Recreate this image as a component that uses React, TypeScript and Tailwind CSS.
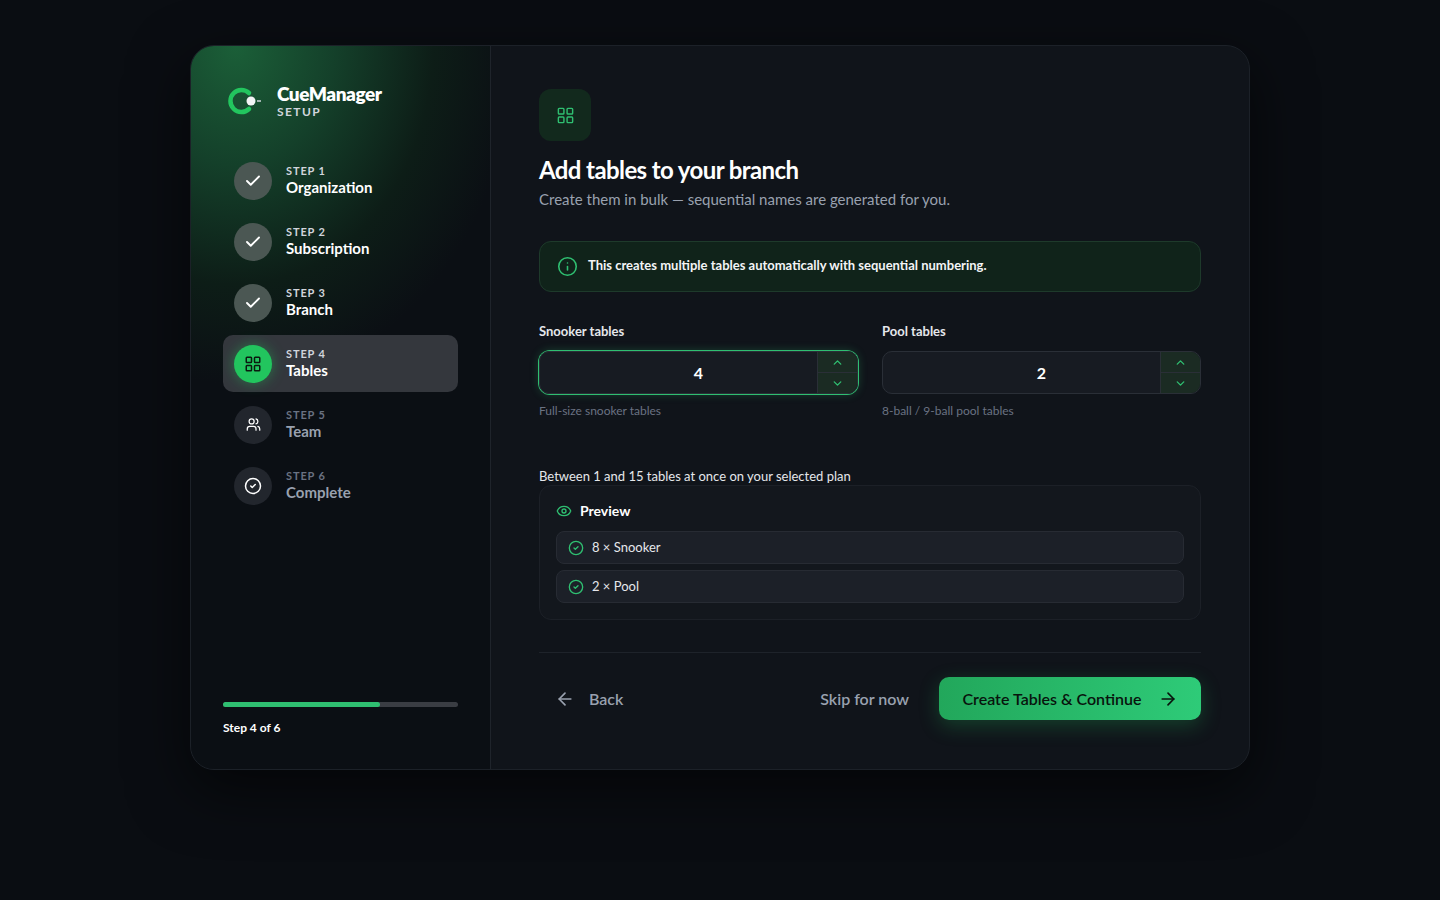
import React from "react";
import { Check, LayoutGrid, Users, CircleCheck, Info, ChevronUp, ChevronDown, Eye, ArrowLeft, ArrowRight } from "lucide-react";

const steps = [
  { n: 1, name: "Organization", state: "done" },
  { n: 2, name: "Subscription", state: "done" },
  { n: 3, name: "Branch", state: "done" },
  { n: 4, name: "Tables", state: "active" },
  { n: 5, name: "Team", state: "todo", icon: "users" },
  { n: 6, name: "Complete", state: "todo", icon: "check" },
];

function Stepper({ value }: { value: string }) {
  return (
    <div className="flex h-[43px] rounded-[10px] border border-[#2a2f37] bg-[#171b22] overflow-hidden">
      <div className="flex-1 flex items-center justify-center pl-[40px] text-[16px] font-bold text-white">{value}</div>
      <div className="w-[40px] flex flex-col border-l border-[#2a2f37] bg-[#1b2b23]">
        <div className="flex-1 flex items-center justify-center border-b border-[#2a2f37] text-[#2fbf71]"><ChevronUp size={13} strokeWidth={2.5} /></div>
        <div className="flex-1 flex items-center justify-center text-[#2fbf71]"><ChevronDown size={13} strokeWidth={2.5} /></div>
      </div>
    </div>
  );
}

export default function App() {
  return (
    <div className="min-h-[900px] w-full bg-[#0a0d12] flex justify-center pt-[45px]" style={{ fontFamily: "Lato, 'Noto Sans', sans-serif" }}>
      <div className="w-[1060px] h-[725px] rounded-[24px] border border-[#1c2128] bg-[#10141a] flex overflow-hidden shadow-[0_20px_60px_rgba(0,0,0,0.6)]">
        <aside className="w-[300px] border-r border-[#1f242b] flex flex-col px-[32px] pt-[38px] pb-[32px] bg-[radial-gradient(ellipse_110%_55%_at_15%_0%,#1b5f38_0%,#14402a_30%,#0d1d17_60%,#0b0f14_85%)]">
          <div className="flex items-center gap-[12px] pl-[4px]">
            <svg width="38" height="30" viewBox="0 0 38 30">
              <path d="M22 7 A11 11 0 1 0 22 23" fill="none" stroke="#22c55e" strokeWidth="4.5" strokeLinecap="round" />
              <circle cx="24" cy="15" r="4.5" fill="#f3f4f6" />
              <line x1="30" y1="15" x2="34" y2="15" stroke="#d1d5db" strokeWidth="1.5" />
            </svg>
            <div className="leading-none">
              <div className="text-[19px] font-extrabold text-white tracking-tight">CueManager</div>
              <div className="text-[12px] font-bold text-gray-300 tracking-[0.12em] mt-[3px]">SETUP</div>
            </div>
          </div>
          <div className="mt-[34px] flex flex-col gap-[4px]">
            {steps.map((s) => {
              const active = s.state === "active";
              return (
                <div key={s.n} className={`flex items-center gap-[14px] h-[57px] px-[11px] rounded-[10px] ${active ? "bg-[#34373d]" : ""}`}>
                  <div className={`w-[38px] h-[38px] rounded-full flex items-center justify-center ${s.state === "done" ? "bg-[#4b5753] text-white" : active ? "bg-[#22c55e] text-[#0b1a10] shadow-[0_0_14px_rgba(34,197,94,0.45)]" : "bg-[#22262d] text-white"}`}>
                    {s.state === "done" && <Check size={18} strokeWidth={2.5} />}
                    {active && <LayoutGrid size={18} strokeWidth={2} />}
                    {s.icon === "users" && <Users size={15} strokeWidth={2} />}
                    {s.icon === "check" && <CircleCheck size={18} strokeWidth={2} />}
                  </div>
                  <div className="leading-tight">
                    <div className={`text-[11px] font-bold tracking-[0.08em] ${s.state === "todo" ? "text-gray-500" : "text-gray-300"}`}>STEP {s.n}</div>
                    <div className={`text-[15px] font-bold ${s.state === "todo" ? "text-gray-400" : "text-white"}`}>{s.name}</div>
                  </div>
                </div>
              );
            })}
          </div>
          <div className="mt-auto">
            <div className="h-[5px] rounded-full bg-[#3a3d43]">
              <div className="h-full w-[67%] rounded-full bg-[#2fbf71]" />
            </div>
            <div className="mt-[12px] text-[12px] font-bold text-white">Step 4 of 6</div>
          </div>
        </aside>
        <main className="flex-1 px-[48px] pt-[43px]">
          <div className="w-[52px] h-[52px] rounded-[12px] bg-[#12291d] flex items-center justify-center text-[#2fbf71]">
            <LayoutGrid size={19} strokeWidth={1.8} />
          </div>
          <h1 className="mt-[11px] text-[24px] font-bold text-white tracking-tight">Add tables to your branch</h1>
          <p className="text-[15px] text-gray-400">Create them in bulk — sequential names are generated for you.</p>
          <div className="mt-[30px] h-[51px] rounded-[12px] border border-[#1e3a2b] bg-[#10231a] flex items-center gap-[10px] px-[17px]">
            <Info size={21} className="text-[#2fbf71]" strokeWidth={1.8} />
            <span className="text-[13px] font-bold text-gray-100">This creates multiple tables automatically with sequential numbering.</span>
          </div>
          <div className="mt-[30px] grid grid-cols-2 gap-[24px]">
            <div>
              <div className="text-[13px] font-bold text-gray-200 mb-[10px]">Snooker tables</div>
              <div className="rounded-[11px] ring-1 ring-[#2fbf71] shadow-[0_0_10px_rgba(47,191,113,0.3)]"><Stepper value="4" /></div>
              <div className="mt-[8px] text-[12px] text-gray-500">Full-size snooker tables</div>
            </div>
            <div>
              <div className="text-[13px] font-bold text-gray-200 mb-[10px]">Pool tables</div>
              <Stepper value="2" />
              <div className="mt-[8px] text-[12px] text-gray-500">8-ball / 9-ball pool tables</div>
            </div>
          </div>
          <div className="mt-[48px] text-[13px] leading-[16px] text-gray-200">Between 1 and 15 tables at once on your selected plan</div>
          <div className="mt-[1px] rounded-[12px] border border-[#1c2027] bg-[#13171d] px-[16px] pt-[15px] pb-[16px]">
            <div className="flex items-center gap-[8px] text-[14px] leading-[20px] font-bold text-white">
              <Eye size={16} className="text-[#2fbf71]" /> Preview
            </div>
            <div className="mt-[10px] flex flex-col gap-[6px]">
              {["8 × Snooker", "2 × Pool"].map((t) => (
                <div key={t} className="h-[33px] rounded-[8px] border border-[#272b33] bg-[#1c2028] flex items-center gap-[8px] px-[11px] text-[13px] text-gray-200">
                  <CircleCheck size={16} className="text-[#2fbf71]" /> {t}
                </div>
              ))}
            </div>
          </div>
          <div className="mt-[32px] border-t border-[#1e232a] pt-[24px] flex items-center">
            <button className="flex items-center gap-[14px] px-[16px] text-[16px] font-semibold text-gray-400">
              <ArrowLeft size={20} /> Back
            </button>
            <div className="ml-auto text-[16px] font-semibold text-gray-400 mr-[30px]">Skip for now</div>
            <button className="h-[43px] w-[262px] rounded-[10px] bg-gradient-to-r from-[#22a75b] to-[#2ecb78] text-[#08140d] text-[16px] font-semibold flex items-center justify-center gap-[16px] shadow-[0_6px_20px_rgba(34,197,94,0.25)]">
              Create Tables &amp; Continue <ArrowRight size={20} />
            </button>
          </div>
        </main>
      </div>
    </div>
  );
}
